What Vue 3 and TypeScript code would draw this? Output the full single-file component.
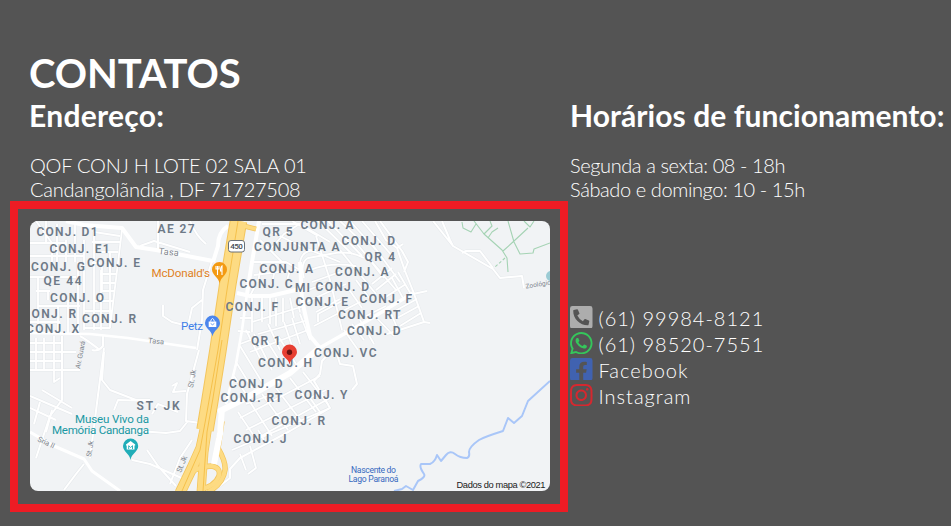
<script setup lang="ts">
interface MapLabel {
  text: string
  x: number
  y: number
  w: number
}

interface Contact {
  text: string
  color: string
  path: string
}

const districts: MapLabel[] = [
  { text: 'CONJ. D1', x: 36.5, y: 235.7, w: 61 },
  { text: 'CONJ. E1', x: 49.5, y: 252.5, w: 60 },
  { text: 'CONJ. G', x: 31, y: 271, w: 54 },
  { text: 'CONJ. E', x: 87, y: 267, w: 53 },
  { text: 'QE 44', x: 43.5, y: 284.7, w: 38 },
  { text: 'CONJ. O', x: 50, y: 301.7, w: 54 },
  { text: 'ONJ. R', x: 31.5, y: 317.5, w: 44.5 },
  { text: 'CONJ. R', x: 82, y: 323.2, w: 54 },
  { text: 'CONJ. X', x: 26, y: 333, w: 53 },
  { text: 'AE 27', x: 157.5, y: 233, w: 37 },
  { text: 'CONJ. A', x: 300.5, y: 229.2, w: 53 },
  { text: 'QR 5', x: 262.5, y: 235.7, w: 30 },
  { text: 'CONJUNTA A', x: 254, y: 251, w: 85.5 },
  { text: 'CONJ. D', x: 341.5, y: 244.5, w: 53.5 },
  { text: 'QR 4', x: 364.5, y: 260.7, w: 30.5 },
  { text: 'CONJ. A', x: 259.5, y: 272.7, w: 53.5 },
  { text: 'CONJ. A', x: 335, y: 276, w: 53.5 },
  { text: 'CONJ. C', x: 239.5, y: 288, w: 53 },
  { text: 'MI', x: 295, y: 292, w: 15 },
  { text: 'CONJ. D', x: 315.5, y: 290.5, w: 53.5 },
  { text: 'CONJ. F', x: 225.5, y: 310.7, w: 52.5 },
  { text: 'CONJ. E', x: 295.5, y: 305.7, w: 52.5 },
  { text: 'CONJ. F', x: 359.5, y: 303.2, w: 52.5 },
  { text: 'CONJ. RT', x: 338, y: 318.5, w: 62.5 },
  { text: 'CONJ. D', x: 347, y: 334.7, w: 53.5 },
  { text: 'QR 1', x: 251, y: 345, w: 29.5 },
  { text: 'CONJ. VC', x: 314, y: 357.2, w: 62.5 },
  { text: 'CONJ. H', x: 258, y: 367, w: 54 },
  { text: 'CONJ. D', x: 229, y: 387.5, w: 53.5 },
  { text: 'CONJ. RT', x: 220.5, y: 402.2, w: 62 },
  { text: 'CONJ. Y', x: 294.5, y: 399.2, w: 53 },
  { text: 'CONJ. R', x: 271.5, y: 425.2, w: 53.5 },
  { text: 'CONJ. J', x: 233.5, y: 443.2, w: 53 },
  { text: 'ST. JK', x: 136.5, y: 409.5, w: 43 },
]

const contacts: Contact[] = [
  {
    text: '(61) 99984-8121',
    color: '#adadad',
    path: 'M400 32H48A48 48 0 0 0 0 80v352a48 48 0 0 0 48 48h352a48 48 0 0 0 48-48V80a48 48 0 0 0-48-48zm-16.39 307.37l-15 65A15 15 0 0 1 354 416C194 416 64 286.29 64 126a15.7 15.7 0 0 1 11.63-14.61l65-15A18.23 18.23 0 0 1 144 96a16.27 16.27 0 0 1 13.79 9.09l30 70A17.9 17.9 0 0 1 189 181a17 17 0 0 1-5.5 11.61l-37.89 31a231.91 231.91 0 0 0 110.78 110.78l31-37.89A17 17 0 0 1 299 291a17.85 17.85 0 0 1 5.91 1.21l70 30A16.25 16.25 0 0 1 384 336a17.41 17.41 0 0 1-.39 3.37z',
  },
  {
    text: '(61) 98520-7551',
    color: '#35c65b',
    path: 'M380.9 97.1C339 55.1 283.2 32 223.9 32c-122.4 0-222 99.6-222 222 0 39.1 10.2 77.3 29.6 111L0 480l117.7-30.9c32.4 17.7 68.9 27 106.1 27h.1c122.3 0 224.1-99.6 224.1-222 0-59.3-25.2-115-67.1-157zm-157 341.6c-33.2 0-65.7-8.9-94-25.7l-6.7-4-69.8 18.3L72 359.2l-4.4-7c-18.5-29.4-28.2-63.3-28.2-98.2 0-101.7 82.8-184.5 184.6-184.5 49.3 0 95.6 19.2 130.4 54.1 34.8 34.9 56.2 81.2 56.1 130.5 0 101.8-84.9 184.6-186.6 184.6zm101.2-138.2c-5.5-2.8-32.8-16.2-37.9-18-5.1-1.9-8.8-2.8-12.5 2.8-3.7 5.6-14.3 18-17.6 21.8-3.2 3.7-6.5 4.2-12 1.4-32.6-16.3-54-29.1-75.5-66-5.7-9.8 5.7-9.1 16.3-30.3 1.8-3.7.9-6.9-.5-9.7-1.4-2.8-12.5-30.1-17.1-41.2-4.5-10.8-9.1-9.3-12.5-9.5-3.2-.2-6.9-.2-10.6-.2-3.7 0-9.7 1.4-14.8 6.9-5.1 5.6-19.4 19-19.4 46.3 0 27.3 19.9 53.7 22.6 57.4 2.8 3.7 39.1 59.7 94.8 83.8 35.2 15.2 49 16.5 66.6 13.9 10.7-1.6 32.8-13.4 37.4-26.4 4.6-13 4.6-24.1 3.2-26.4-1.3-2.5-5-3.9-10.5-6.6z',
  },
  {
    text: 'Facebook',
    color: '#4062b0',
    path: 'M400 32H48A48 48 0 0 0 0 80v352a48 48 0 0 0 48 48h137.25V327.69h-63V256h63v-54.64c0-62.15 37-96.48 93.67-96.48 27.14 0 55.52 4.84 55.52 4.84v61h-31.27c-30.81 0-40.42 19.12-40.42 38.73V256h68.78l-11 71.69h-57.78V480H400a48 48 0 0 0 48-48V80a48 48 0 0 0-48-48z',
  },
  {
    text: 'Instagram',
    color: '#d5282f',
    path: 'M224.1 141c-63.6 0-114.9 51.3-114.9 114.9s51.3 114.9 114.9 114.9S339 319.5 339 255.9 287.7 141 224.1 141zm0 189.6c-41.1 0-74.7-33.5-74.7-74.7s33.5-74.7 74.7-74.7 74.7 33.5 74.7 74.7-33.6 74.7-74.7 74.7zm146.4-194.3c0 14.9-12 26.8-26.8 26.8-14.9 0-26.8-12-26.8-26.8s12-26.8 26.8-26.8 26.8 12 26.8 26.8zm76.1 27.2c-1.7-35.9-9.9-67.7-36.2-93.9-26.2-26.2-58-34.4-93.9-36.2-37-2.1-147.9-2.1-184.9 0-35.8 1.7-67.6 9.9-93.9 36.1s-34.4 58-36.2 93.9c-2.1 37-2.1 147.9 0 184.9 1.7 35.9 9.9 67.7 36.2 93.9s58 34.4 93.9 36.2c37 2.1 147.9 2.1 184.9 0 35.9-1.7 67.7-9.9 93.9-36.2 26.2-26.2 34.4-58 36.2-93.9 2.1-37 2.1-147.8 0-184.8zM398.8 388c-7.8 19.6-22.9 34.7-42.6 42.6-29.5 11.7-99.5 9-132.1 9s-102.7 2.6-132.1-9c-19.6-7.8-34.7-22.9-42.6-42.6-11.7-29.5-9-99.5-9-132.1s-2.6-102.7 9-132.1c7.8-19.6 22.9-34.7 42.6-42.6 29.5-11.7 99.5-9 132.1-9s102.7-2.6 132.1 9c19.6 7.8 34.7 22.9 42.6 42.6 11.7 29.5 9 99.5 9 132.1s2.7 102.7-9 132.1z',
  },
]

// Residential streets, drawn thinner than the through lanes
const streets: string[] = [
  // west blocks
  'M30 243H66M30 256H84M36 221L52 243V262M46 221V243M57 224V262M66 240V262M75 221V262M84 240V330M94 232V330M101 270V330M110 252V328',
  'M94 232L120 236M92 242H120M94 252H118M92 263H100M100 274H116M30 277H76M101 283H115M36 291H50M101 291H114M94 301H114M84 311H112M84 328H110M38 277V334M48 290V300M58 306V334M68 300V334M38 306H80M30 322H60',
  'M122 230L110 328M78 262L78 334M102 265V290M110 262V272',
  'M30 343H62M30 352H76M30 361H62M30 370H80M36 338V370M44 338V370M54 336V371M62 336V371M54 371V382L60 378',
  // north-central blocks
  'M262 224L300 224L330 242M272 232L300 246L340 262M260 240L282 262M268 252L284 234L304 221M292 221L318 236M318 221L352 254M328 221L362 256M340 221L360 240M350 221L376 250M362 221L394 258',
  'M300 262Q302 250 316 250M304 278Q300 262 308 258L330 254Q350 250 364 258M316 236L330 280L342 330M310 270Q330 262 356 266M312 282L340 272M308 290L330 282M302 304L346 284M314 326L360 302M316 312L340 299M318 322V314L344 300',
  'M352 238L372 262L396 290M362 250L384 278M372 244L400 282M340 250L376 294M356 280L372 302M348 288L362 308M372 284L392 268M376 290L396 274M384 298L406 284M392 278L404 300M398 272L412 296',
  'M250 262L286 262L300 270M262 262L258 282M276 264L272 284M290 270L286 284M254 275L296 270M250 296L256 284',
  'M395 311L417 299M397 318L419 306M400 326L421 313M388 306L398 330M372 313L394 336M360 320L374 344M352 324L364 340M344 330L358 350M366 316L386 306',
  // centre blocks
  'M240 318H252M238 331L250 332M240 344L256 338M252 298V332M262 298V322M270 298V324M276 298V326M283 298V322M290 298L294 318M297 298L300 312M252 322L304 306M258 334L308 320M284 322L292 346M292 318L300 344M300 314L310 340',
  'M246 330L262 362M240 346L262 382M236 362L252 388M254 334L272 370M264 336L284 368M278 336L296 364M250 352L308 330M234 376L246 394M268 324L280 350',
  // south blocks
  'M238 412L258 442M250 402L272 436M262 394L288 430M276 388L302 422M290 378L316 412M303 372L328 404M240 418L320 376M246 430L326 390M254 440L330 398M232 450L330 408M246 404L268 396',
  'M250 446L256 468L248 474M240 454L246 470M264 440L258 430M320 412L310 398',
]

const lanes: string[] = [
  'M158 221L158 250M190 221Q196 236 206 244M140 246L154 241L190 252M163 305V316L172 322L188 326M100 350Q84 338 80 336M92 350Q98 352 103 346L103 336M62 336V400L50 416L36 458',
  'M104 348L90 458M104 352L102 380L110 390L136 400L150 400M114 410L118 400L150 401M172 386L177 383L173 392L186 391M30 396L58 408L72 414M30 408L56 420M42 390L72 408M40 402L34 424M52 410L46 432',
  'M199 350L187 394L186 421L200 423M188 421L180 431L166 433L125 430M152 414L158 404L178 412M132 460L150 464L186 480M147 450L158 466L176 486M192 440L180 458L170 484M84 464L76 474L64 490',
  'M433 221L453 246M442 221L450 240L453 246L493 269L500 278L522 276L524 288M462 253L466 251L480 251L493 268',
  'M375 221L386 240L397 248L405 271L413 291L424 322L387 334M380 221L402 251L408 262L404 272M397 248L403 244M413 294L427 291M424 322L430 323',
  'M337 354L340 364L353 366L357 384L352 390M332 350L322 361L320 374L314 381L330 408L290 431L240 458L230 469L230 478L213 491',
  'M212 261L203 290L202 320L197 350M188 326L192 308L202 300',
]
</script>

<template>
  <main class="page">
    <h1 class="title">CONTATOS</h1>
    <div class="columns">
      <section class="address">
        <h2 class="heading">Endereço:</h2>
        <p class="lines">QOF CONJ H LOTE 02 SALA 01<br />Candangolãndia , DF 71727508</p>
        <div class="frame">
          <svg class="map" viewBox="30 221 520 270" role="img">
            <rect x="30" y="221" width="520" height="270" fill="#f1f3f5" />
            <g class="casing">
              <path v-for="d in streets" :key="d" :d="d" />
              <path v-for="d in lanes" :key="d" :d="d" />
            </g>
            <g class="streets">
              <path v-for="d in streets" :key="d" :d="d" />
            </g>
            <g class="lanes">
              <path v-for="d in lanes" :key="d" :d="d" />
            </g>
            <g class="avenues">
              <path d="M66 221L84 225L122 228L136 247L156 250L213 261" stroke-width="4" />
              <path d="M30 333L90 334L128 338L196 348" stroke-width="2.4" />
              <path d="M213 262L218 246Q218 232 228 226" stroke-width="4" />
              <path d="M259 221L252 262L247 294" stroke-width="4" />
              <path d="M247 294L242 330L236 364L226 404" stroke-width="2.6" />
              <path d="M237 293L250 296L270 296L300 289" stroke-width="4" />
              <path d="M300 262L302 300L310 336L320 348" stroke-width="4" />
              <path d="M218 412L246 398L290 373L318 349" stroke-width="6" />
              <path d="M316 350L372 318L413 293" stroke-width="3.5" />
              <path d="M30 432L54 446L84 459L92 471L120 491" stroke-width="3" />
            </g>

            <g class="trails">
              <path d="M474 221L484 234L502 250L507 258L508 272M484 234L492 226L490 221M462 222L463 228L471 232L476 224M488 238L492 232L498 228M503 251L514 241L528 228M508 221L514 242L520 254L533 253L534 249L550 243M524 221L530 227L534 221" />
              <path d="M505 258L495 267" stroke-dasharray="3 2" />
            </g>
            <circle cx="551" cy="276" r="5" fill="#9bcbd4" />

            <path class="river" d="M394 491L402 489L406 486L413 490L418 481Q426 477 424 474Q419 467 421 464L430 464Q435 462 437 455L441 461L446 455Q450 450 455 454Q460 458 467 458Q470 457 469 452Q469 447 479 440Q484 437 503 431L508 418L514 423L522 416L528 401L550 381" />

            <g class="highway-edge">
              <path d="M238.500 221L227.500 286L218 350L210 400L205 430" stroke-width="17.500" />
              <path d="M206 425L201 448L192 468L180 493" stroke-width="11" />
              <path d="M208 425L204 452L201 493" stroke-width="9" />
              <path d="M222 421L218 448Q226 462 225 470Q223 484 208 492" stroke-width="5.500" />
              <path d="M186 478Q196 466 212 466Q221 468 219 476Q215 487 198 490" stroke-width="5.500" />
              <path d="M244 226L256 229" stroke-width="5" />
            </g>
            <g class="highway">
              <path d="M238.500 221L227.500 286L218 350L210 400L205 430" stroke-width="15.500" />
              <path d="M206 425L201 448L192 468L180 493" stroke-width="9.500" />
              <path d="M208 425L204 452L201 493" stroke-width="7.500" />
              <path d="M222 421L218 448Q226 462 225 470Q223 484 208 492" stroke-width="4" />
              <path d="M186 478Q196 466 212 466Q221 468 219 476Q215 487 198 490" stroke-width="4" />
              <path d="M244 226L256 229" stroke-width="3.500" />
            </g>
            <g class="highway-lines">
              <path d="M238 221L227 290L218 350L207 412L200 450L182 491" />
              <path d="M222 340L213 398L207 432L203 491" />
            </g>
            <path d="M222 408L220 434L214 464" fill="none" stroke="#fff" stroke-width="6" />

            <g class="districts">
              <text v-for="(l, i) in districts" :key="i" :x="l.x" :y="l.y" :textLength="l.w">{{ l.text }}</text>
            </g>

            <g class="roadnames">
              <text transform="translate(158.500 254) rotate(6)" textLength="20" font-size="9">Tasa</text>
              <text transform="translate(148 343) rotate(5)" textLength="16" font-size="7.500">Tasa</text>
              <text transform="translate(80 369) rotate(-79)" textLength="28" font-size="7">Av. Guará</text>
              <text transform="translate(37 441) rotate(25)" textLength="18" font-size="7.500">Sria II</text>
              <text transform="translate(91 457) rotate(-81)" textLength="16" font-size="7">St. Jk</text>
              <text transform="translate(193 388) rotate(-80)" textLength="18" font-size="7.500">St. Jk</text>
              <text transform="translate(181 473) rotate(-68)" textLength="17" font-size="7.500">St. Jk</text>
              <text transform="translate(526 288.500) rotate(-9)" font-size="6.500">Zoológico</text>
            </g>

            <g class="places">
              <text x="151.500" y="277" textLength="58.500" fill="#e0811f">McDonald's</text>
              <text x="181" y="330" textLength="22" fill="#3f7fe8">Petz</text>
              <text x="75" y="422.800" textLength="74" fill="#1b98a3">Museu Vivo da</text>
              <text x="52" y="434" textLength="97" fill="#1b98a3">Memória Candanga</text>
            </g>
            <g class="spring">
              <text x="351" y="473" textLength="45">Nascente do</text>
              <text x="348.500" y="482" textLength="50">Lago Paranoá</text>
            </g>

            <rect x="228.500" y="240.500" width="16" height="11.500" rx="2.500" fill="#fff" stroke="#6a7178" />
            <text class="route" x="230.300" y="249.300" textLength="12.500">450</text>

            <g fill="#f39a12">
              <path d="M219.500 283.500C218.500 277 212 275 212 269.500A7.500 7.500 0 0 1 227 269.500C227 275 220.500 277 219.500 283.500Z" />
              <path d="M216 266V269H219V266M217.500 266V275M222 275V266Q220.500 267 220.500 271H222" fill="none" stroke="#fff" stroke-width="1.100" />
            </g>
            <g>
              <path d="M212.500 336.500C211.500 330 205 328.500 205 323A7.500 7.500 0 0 1 220 323C220 328.500 213.500 330 212.500 336.500Z" fill="#4b86ec" />
              <path d="M208.700 321.500H216.300V327H208.700Z" fill="#fff" />
              <path d="M210.500 321.500Q212.500 315.500 214.500 321.500" fill="none" stroke="#fff" />
              <path d="M210.700 323.500Q212.500 326 214.300 323.500" fill="none" stroke="#4b86ec" stroke-width=".8" />
            </g>
            <g>
              <path d="M130.500 460C129.500 453.500 123 451.500 123 446A7.600 7.600 0 0 1 138.200 446C138.200 451.500 131.500 453.500 130.500 460Z" fill="#20adb8" />
              <path d="M126 444.500L130.600 441L135.200 444.500V445.500H134.500V449.500H126.700V445.500H126Z" fill="#fff" />
              <path d="M128.700 449V445.700L130.600 447.500L132.500 445.700V449" fill="none" stroke="#20adb8" stroke-width=".9" />
            </g>
            <path d="M289.500 364.500C288.500 358 282 357.500 282 352A7.500 7.500 0 0 1 297 352C297 357.500 290.500 358 289.500 364.500Z" fill="#e73f32" />
            <circle cx="289.500" cy="352.300" r="2.700" fill="#6a130f" />

            <text class="credit" x="456.500" y="488" textLength="89">Dados do mapa ©2021</text>
          </svg>
        </div>
      </section>

      <section class="hours">
        <h2 class="heading">Horários de funcionamento:</h2>
        <p class="lines">Segunda a sexta: 08 - 18h<br />Sábado e domingo: 10 - 15h</p>
        <ul class="contacts">
          <li v-for="c in contacts" :key="c.text" class="contact">
            <svg class="icon" viewBox="0 32 448 448" :fill="c.color"><path :d="c.path" /></svg>
            <span>{{ c.text }}</span>
          </li>
        </ul>
      </section>
    </div>
  </main>
</template>

<style>
body {
  margin: 0;
  background: #545454;
}
</style>

<style scoped>
.page {
  box-sizing: border-box;
  width: 951px;
  height: 526px;
  padding: 49px 0 0 30px;
  overflow: hidden;
  background: #545454;
  color: #fff;
  font-family: Lato, sans-serif;
}
.title {
  margin: 0 0 0 -1px;
  font-size: 40px;
  line-height: 48px;
  font-weight: 700;
  letter-spacing: -0.1px;
}
.columns {
  display: grid;
  grid-template-columns: 540px 1fr;
}
.heading {
  margin: 0 0 20px;
  font-size: 30px;
  line-height: 36px;
  font-weight: 700;
  letter-spacing: 0.06px;
  white-space: nowrap;
}
.address .heading {
  margin-left: -1px;
  letter-spacing: 0.28px;
}
.lines {
  margin: 0;
  font-size: 20px;
  line-height: 24px;
  font-weight: 300;
  letter-spacing: -0.23px;
  white-space: nowrap;
}
.hours .lines {
  letter-spacing: -0.4px;
}
.frame {
  box-sizing: border-box;
  width: 558px;
  height: 311px;
  margin: 0 0 0 -20px;
  padding: 12px;
  border: 8px solid #ed1c24;
}
.map {
  display: block;
  width: 520px;
  height: 270px;
  border-radius: 8px;
  font-family: Roboto, sans-serif;
}
.contacts {
  margin: 104px 0 0;
  padding: 0;
  list-style: none;
}
.contact {
  display: flex;
  align-items: flex-start;
  gap: 6px;
  height: 26px;
  font-size: 20px;
  line-height: 26px;
  font-weight: 300;
  letter-spacing: 1px;
}
.icon {
  width: 22.5px;
  height: 22.5px;
  margin-top: 0.7px;
}
.casing path,
.streets path,
.lanes path,
.avenues path,
.trails path,
.river,
.highway path,
.highway-edge path,
.highway-lines path {
  fill: none;
  stroke-linejoin: round;
}
.casing {
  stroke: #e6e9ec;
  stroke-width: 3;
}
.streets {
  stroke: #fff;
  stroke-width: 1.8;
}
.lanes {
  stroke: #fff;
  stroke-width: 2;
}
.avenues {
  stroke: #fff;
}
.trails {
  stroke: #a5d3b4;
  stroke-width: 1.1;
}
.river {
  stroke: #a9c6f8;
  stroke-width: 2;
}
.highway-edge {
  stroke: #f3c55c;
}
.highway {
  stroke: #fddb83;
}
.highway-lines {
  stroke: #f5c04b;
  stroke-width: 1;
}
.districts {
  fill: #6d7987;
  font-size: 12px;
  font-weight: 600;
}
.roadnames {
  fill: #7d848c;
}
.places {
  font-size: 11.6px;
}
.spring {
  fill: #3769c0;
  font-size: 8.6px;
}
.route {
  fill: #434a52;
  font-size: 8px;
  font-weight: 500;
}
.credit {
  fill: #202020;
  font-family: 'Liberation Sans', Arial, sans-serif;
  font-size: 9.3px;
}
</style>
